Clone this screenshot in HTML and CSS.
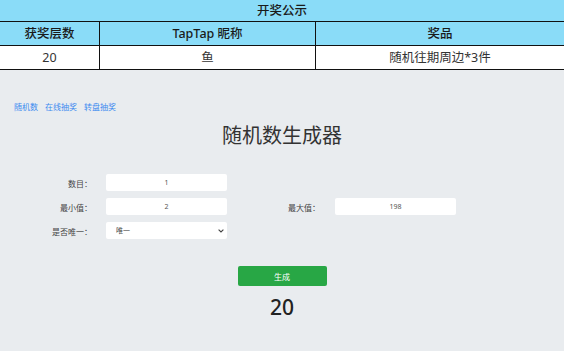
FILE: index.html
```html
<!DOCTYPE html>
<html lang="zh-CN">
<head>
<meta charset="utf-8">
<title>随机数生成器</title>
<link rel="stylesheet" href="styles.css">
</head>
<body>
<table class="award">
  <tr class="head"><th colspan="3">开奖公示</th></tr>
  <tr class="head">
    <th class="c1">获奖层数</th>
    <th class="c2">TapTap 昵称</th>
    <th class="c3">奖品</th>
  </tr>
  <tr class="row">
    <td>20</td>
    <td>鱼</td>
    <td>随机往期周边*3件</td>
  </tr>
</table>
<main class="main">
  <nav class="nav">
    <a href="#">随机数</a>
    <a href="#">在线抽奖</a>
    <a href="#">转盘抽奖</a>
  </nav>
  <h1 class="title">随机数生成器</h1>
  <div class="form">
    <label class="lbl">数目：</label>
    <input class="field" type="text" value="1">
    <span></span><span></span>
    <label class="lbl">最小值：</label>
    <input class="field" type="text" value="2">
    <label class="lbl lbl2">最大值：</label>
    <input class="field" type="text" value="198">
    <label class="lbl">是否唯一：</label>
    <div class="selwrap">
      <select class="sel"><option>唯一</option><option>不唯一</option></select>
      <svg class="chev" width="6" height="4" viewBox="0 0 6 4"><path d="M0.6 0.6 L3 3 L5.4 0.6" fill="none" stroke="#444" stroke-width="1.1"/></svg>
    </div>
  </div>
  <div class="actions"><button class="btn" type="button">生成</button></div>
  <div class="result">20</div>
</main>
</body>
</html>
```
FILE: styles.css
```css
html, body {
  margin: 0;
  padding: 0;
  height: 100%;
}
body {
  background: #e9ecef;
  font-family: "Noto Sans", "Noto Sans CJK SC", sans-serif;
  color: #222;
}
.award {
  width: 100%;
  border-collapse: collapse;
  background: #fff;
}
.award th, .award td {
  border: 1px solid #111;
  text-align: center;
  padding: 0;
  font-size: 12.5px;
  line-height: 22px;
  height: 23px;
}
.award tr:first-child th {
  border-top: none;
  height: 21px;
  line-height: 21px;
}
.award th:first-child, .award td:first-child { border-left: none; }
.award th:last-child, .award td:last-child { border-right: none; }
.head th {
  background: #8adcf8;
  font-weight: 500;
  color: #1a1a1a;
}
.row td {
  color: #333;
  font-weight: normal;
}
.c1 { width: 99px; }
.c2 { width: 215px; }
.main {
  padding-top: 31px;
}
.nav {
  padding-left: 14px;
  font-size: 8px;
  line-height: 12px;
  display: flex;
  gap: 7px;
}
.nav a {
  color: #3d8bf0;
  text-decoration: none;
}
.title {
  margin: 11px 0 0;
  text-align: center;
  font-size: 20px;
  line-height: 24px;
  font-weight: normal;
  color: #333;
}
.form {
  margin-top: 26px;
  display: grid;
  grid-template-columns: 106px 121px 108px 121px;
  grid-auto-rows: 17px;
  row-gap: 7px;
}
.lbl {
  text-align: right;
  padding-right: 14px;
  font-size: 8px;
  line-height: 19px;
  color: #444;
}
.lbl2 { padding-right: 15px; }
.field {
  box-sizing: border-box;
  display: block;
  width: 121px;
  height: 17px;
  border: none;
  border-radius: 2px;
  background: #fff;
  text-align: center;
  font-family: "Noto Sans", "Noto Sans CJK SC", sans-serif;
  font-size: 7px;
  color: #555;
  padding: 0;
  outline: none;
}
.selwrap {
  position: relative;
  display: block;
  width: 121px;
  height: 17px;
}
.sel {
  display: block;
  appearance: none;
  -webkit-appearance: none;
  box-sizing: border-box;
  width: 121px;
  height: 17px;
  border: none;
  border-radius: 2px;
  background: #fff;
  padding: 0 0 0 10px;
  font-family: "Noto Sans", "Noto Sans CJK SC", sans-serif;
  font-size: 7px;
  color: #444;
  outline: none;
}
.chev {
  position: absolute;
  right: 3px;
  top: 7px;
  pointer-events: none;
}
.actions {
  margin-top: 27px;
  display: flex;
  justify-content: center;
}
.btn {
  width: 89px;
  height: 20px;
  border: none;
  border-radius: 2px;
  background: #28a745;
  color: #fff;
  font-family: "Noto Sans", "Noto Sans CJK SC", sans-serif;
  font-size: 8px;
  padding: 0;
}
.result {
  margin-top: 9px;
  text-align: center;
  font-size: 21px;
  line-height: 24px;
  font-weight: 500;
  color: #222;
}
```
